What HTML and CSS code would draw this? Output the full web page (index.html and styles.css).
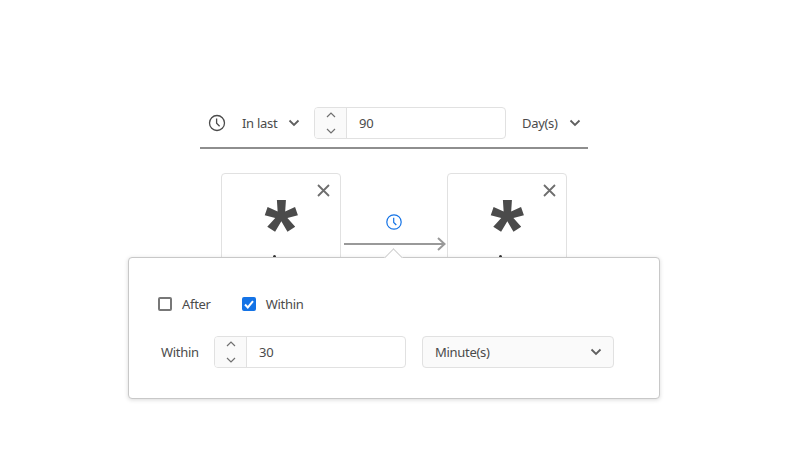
FILE: index.html
```html
<!DOCTYPE html>
<html lang="en">
<head>
<meta charset="utf-8">
<title>Time constraint</title>
<link rel="stylesheet" href="styles.css">
</head>
<body>
<div class="page">
  <div class="toolbar">
    <svg class="clock" width="18" height="18" viewBox="0 0 18 18"><circle cx="9" cy="9" r="7.500"/><path d="M8.600 4.400V9.200L11.600 12.200"/></svg>
    <div class="drop drop-range"><span>In last</span><svg class="chev" width="12" height="8" viewBox="0 0 12 8"><path d="M1.500 1.500L6 6L10.500 1.500"/></svg></div>
    <div class="stepper stepper-top">
      <div class="spin"><svg width="10" height="22" viewBox="0 0 10 22"><path d="M1 5L5 1L9 5M1 17L5 21L9 17"/></svg></div>
      <div class="value">90</div>
    </div>
    <div class="drop drop-unit"><span>Day(s)</span><svg class="chev" width="12" height="8" viewBox="0 0 12 8"><path d="M1.500 1.500L6 6L10.500 1.500"/></svg></div>
  </div>
  <div class="flow">
    <div class="card">
      <svg class="close" width="13" height="13" viewBox="0 0 13 13"><path d="M1 1L12 12M12 1L1 12"/></svg>
      <div class="star">*</div>
      <div class="dot"></div>
    </div>
    <div class="link">
      <svg class="clock-small" width="16" height="16" viewBox="0 0 16 16"><circle cx="8" cy="8" r="7.200"/><path d="M7.700 3.800V8.400L10.300 11"/></svg>
      <svg class="arrow" width="102" height="14" viewBox="0 0 102 14"><path d="M0 7H100M94 1L100.500 7L94 13"/></svg>
    </div>
    <div class="card">
      <svg class="close" width="13" height="13" viewBox="0 0 13 13"><path d="M1 1L12 12M12 1L1 12"/></svg>
      <div class="star">*</div>
      <div class="dot"></div>
    </div>
  </div>
  <div class="popover">
    <div class="tip"></div>
    <div class="checks">
      <label class="check"><span class="box"></span>After</label>
      <label class="check"><span class="box box-on"><svg width="10" height="9" viewBox="0 0 10 9"><path d="M1 4.500L3.800 7.500L9 1.200"/></svg></span>Within</label>
    </div>
    <div class="fields">
      <span class="field-label">Within</span>
      <div class="stepper stepper-pop">
        <div class="spin"><svg width="10" height="22" viewBox="0 0 10 22"><path d="M1 5L5 1L9 5M1 17L5 21L9 17"/></svg></div>
        <div class="value">30</div>
      </div>
      <div class="select"><span>Minute(s)</span><svg class="chev" width="12" height="8" viewBox="0 0 12 8"><path d="M1.500 1.500L6 6L10.500 1.500"/></svg></div>
    </div>
  </div>
</div>
</body>
</html>
```
FILE: styles.css
```css
* { box-sizing: border-box; }
html, body { margin: 0; height: 100%; background: #fff; }
body { font-family: "Noto Sans", "Open Sans", sans-serif; font-size: 13px; letter-spacing: -.3px; color: #4b4b4b; overflow: hidden; }
.page { position: relative; width: 788px; height: 459px; padding-top: 107px; }
svg { display: block; fill: none; }

.toolbar { width: 388px; height: 42px; margin-left: 200px; padding-left: 8px; display: flex; align-items: flex-start; border-bottom: 2px solid #8e8e8e; }
.clock { margin-top: 7px; stroke: #4b4b4b; stroke-width: 1.300; }
.drop { height: 32px; display: flex; align-items: center; }
.drop-range { margin-left: 16px; width: 72px; gap: 11px; }
.drop-unit { margin-left: 16px; gap: 11px; }
.chev { stroke: #5f5f5f; stroke-width: 1.800; }

.stepper { height: 32px; display: flex; background: #fff; border: 1px solid #e1e1e1; border-radius: 4px; }
.stepper-top { width: 192px; }
.stepper-pop { width: 192px; margin-left: 16px; }
.spin { width: 32px; flex: none; display: flex; align-items: center; justify-content: center; background: #fafafa; border-right: 1px solid #e1e1e1; border-radius: 3px 0 0 3px; }
.spin svg { stroke: #707070; stroke-width: 1.200; }
.value { padding-left: 12px; line-height: 30px; }

.flow { display: flex; margin: 24px 0 0 221px; }
.card { position: relative; width: 120px; height: 140px; background: #fff; border: 1px solid #e1e1e1; border-radius: 4px; text-align: center; }
.close { position: absolute; top: 10px; right: 10px; stroke: #6e6e6e; stroke-width: 1.800; }
.star { font-family: "Liberation Sans", sans-serif; font-size: 86px; font-weight: 700; line-height: 90px; height: 76px; color: #4b4b4b; margin-top: 10px; }
.dot { position: absolute; left: 51px; top: 81px; width: 3px; height: 3px; border-radius: 50%; background: #333; }
.link { width: 106px; position: relative; }
.clock-small { margin: 41px 0 0 45px; stroke: #1473e6; stroke-width: 1.200; }
.arrow { margin: 7px 0 0 3px; stroke: #999; stroke-width: 2; }

.popover { position: absolute; left: 128px; top: 257px; width: 532px; height: 142px; padding: 37px 0 0 29px; background: #fff; border: 1px solid #c8c8c8; border-radius: 4px; box-shadow: 0 1px 4px rgba(0, 0, 0, .15); }
.tip { position: absolute; left: 258px; top: -7px; width: 13px; height: 13px; background: #fff; border: 1px solid #d0d0d0; border-width: 1px 0 0 1px; transform: rotate(45deg); }
.checks { display: flex; gap: 31px; height: 18px; }
.check { display: flex; align-items: center; gap: 10px; }
.box { width: 14px; height: 14px; border: 2px solid #777; border-radius: 2px; display: flex; align-items: center; justify-content: center; }
.box-on { background: #1473e6; border-color: #1473e6; }
.box-on svg { stroke: #fff; stroke-width: 2; flex: none; }
.fields { display: flex; align-items: center; margin: 23px 0 0 3px; }
.field-label { width: 37px; }
.select { width: 192px; height: 32px; margin-left: 16px; padding: 0 11px 0 12px; display: flex; align-items: center; justify-content: space-between; background: #fafafa; border: 1px solid #e1e1e1; border-radius: 4px; }
```
